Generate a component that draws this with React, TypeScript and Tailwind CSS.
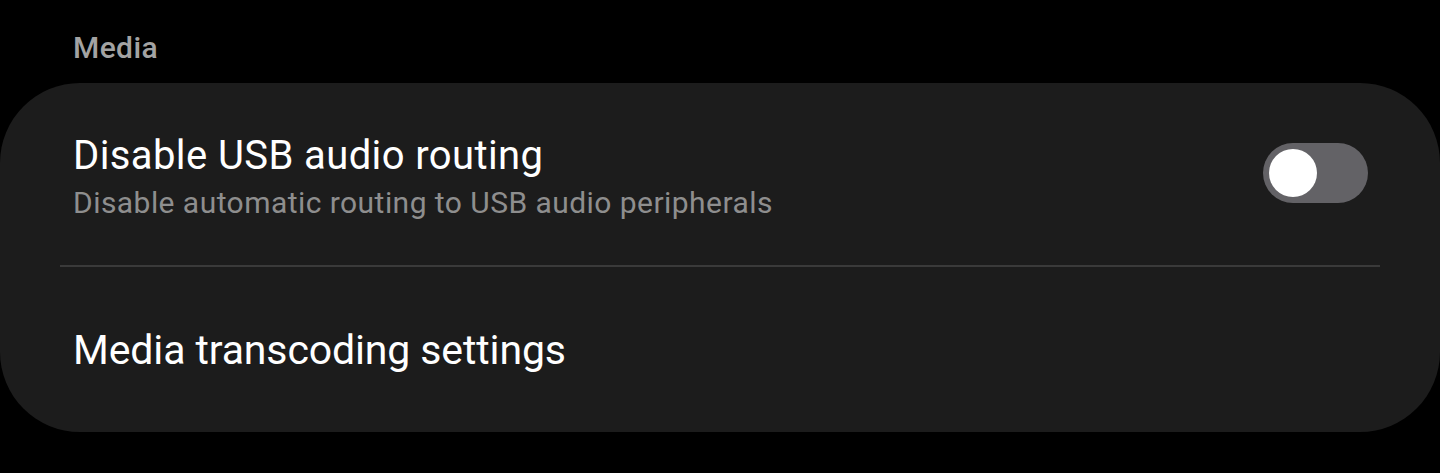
import React from "react";

export default function App() {
  return (
    <div className="w-[1440px] h-[473px] bg-black overflow-hidden" style={{ fontFamily: "Roboto, 'Noto Sans', sans-serif" }}>
      <div className="pt-[30px] pl-[73px] h-[83px]">
        <div className="text-[30px] leading-[35px] font-medium tracking-[0.4px] text-[#a3a3a3]">Media</div>
      </div>
      <div className="h-[349px] bg-[#1c1c1c] rounded-[80px] flex flex-col">
        <div className="h-[182px] flex items-start pt-[50px] pl-[73px] pr-[72px]">
          <div className="flex-1 flex flex-col">
            <div className="text-[40px] leading-[46px] tracking-[0.4px] text-white">Disable USB audio routing</div>
            <div className="mt-[4px] text-[30px] leading-[40px] tracking-[0.45px] text-[#8e8e8e]">Disable automatic routing to USB audio peripherals</div>
          </div>
          <div className="mt-[10px] w-[105px] h-[60px] rounded-full bg-[#636266] flex items-center pl-[6px]">
            <div className="w-[48px] h-[48px] rounded-full bg-white" />
          </div>
        </div>
        <div className="mx-[60px] h-[2px] bg-[#3a3a3a]" />
        <div className="flex-1 flex items-center pl-[73px]">
          <div className="text-[41px] leading-[48px] tracking-[-0.12px] text-white">Media transcoding settings</div>
        </div>
      </div>
    </div>
  );
}
